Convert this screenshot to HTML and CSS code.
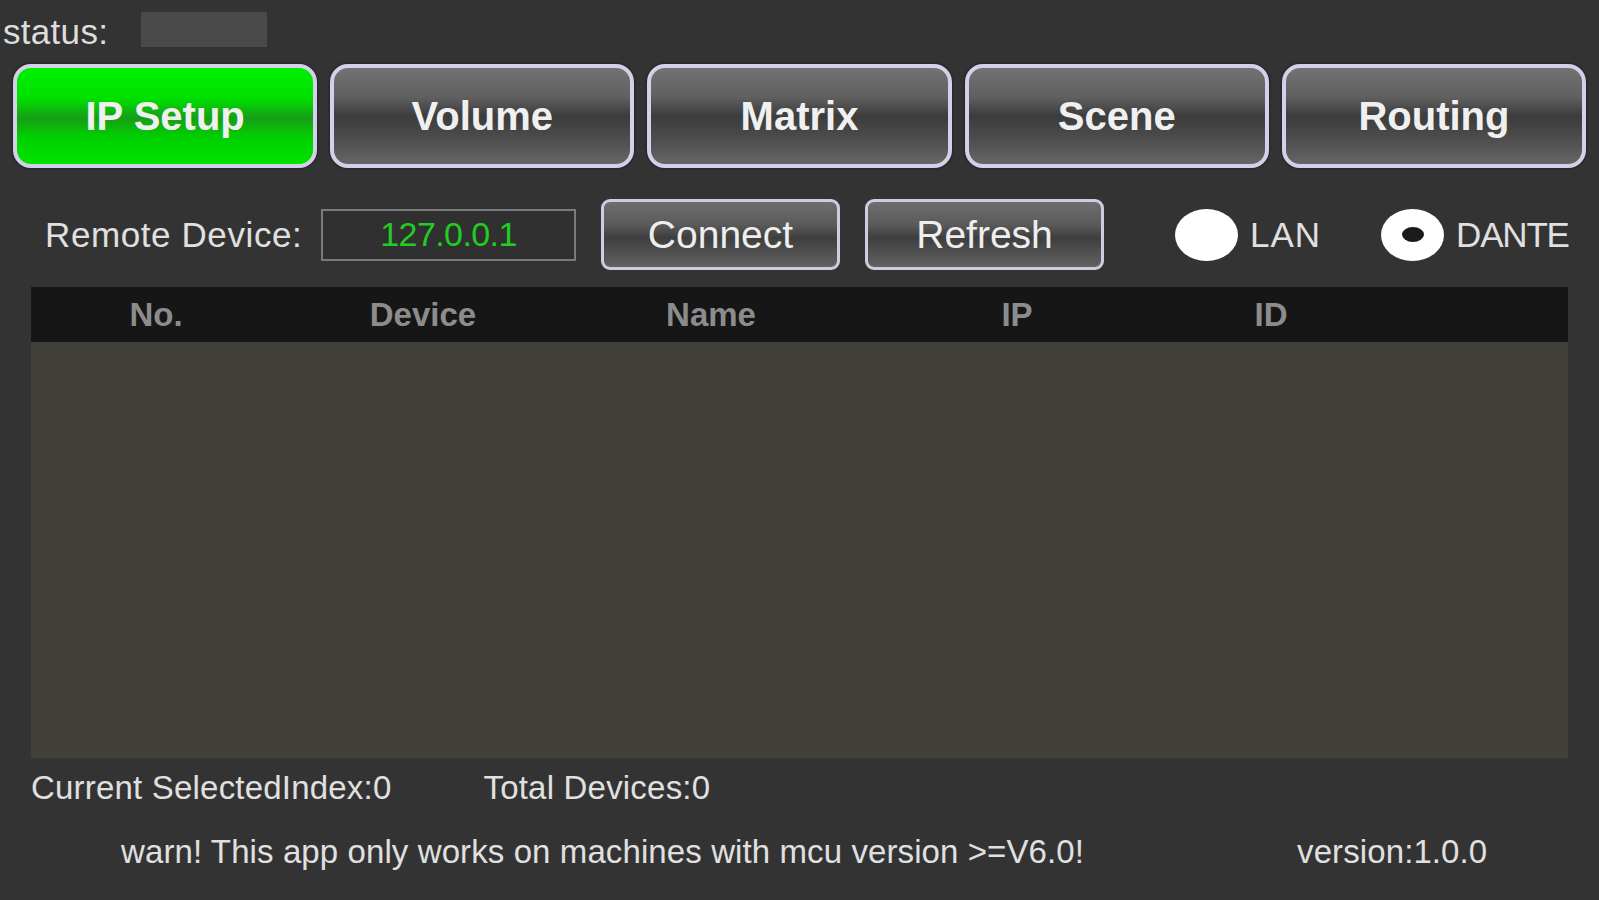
FILE: index.html
```html
<!DOCTYPE html>
<html>
<head>
<meta charset="utf-8">
<link rel="stylesheet" href="styles.css">
</head>
<body>
<div class="app">
  <div class="status-row">
    <span class="status-label">status:</span>
    <div class="status-box"></div>
  </div>
  <div class="tabs">
    <div class="tab active">IP Setup</div>
    <div class="tab">Volume</div>
    <div class="tab">Matrix</div>
    <div class="tab">Scene</div>
    <div class="tab">Routing</div>
  </div>
  <div class="controls">
    <span class="remote-label">Remote Device:</span>
    <div class="ip-field">127.0.0.1</div>
    <div class="btn btn-connect">Connect</div>
    <div class="btn btn-refresh">Refresh</div>
    <div class="radio radio-lan"></div>
    <span class="radio-label lan">LAN</span>
    <div class="radio radio-dante checked"><span class="dot"></span></div>
    <span class="radio-label dante">DANTE</span>
  </div>
  <div class="table">
    <div class="thead">
      <span>No.</span>
      <span>Device</span>
      <span>Name</span>
      <span>IP</span>
      <span>ID</span>
      <span></span>
    </div>
    <div class="tbody"></div>
  </div>
  <div class="info-row">
    <span class="sel-index">Current SelectedIndex:0</span>
    <span class="total">Total Devices:0</span>
  </div>
  <div class="warn-row">
    <span class="warn">warn! This app only works on machines with mcu version &gt;=V6.0!</span>
    <span class="version">version:1.0.0</span>
  </div>
</div>
</body>
</html>
```
FILE: styles.css
```css
* { box-sizing: border-box; }
html, body {
  margin: 0;
  padding: 0;
  background: #333333;
}
body {
  width: 1599px;
  height: 900px;
  overflow: hidden;
  font-family: "Liberation Sans", Arial, sans-serif;
  color: #e6e6e6;
}
.app {
  display: flex;
  flex-direction: column;
  width: 1599px;
  height: 900px;
}
.status-row {
  height: 58px;
  display: flex;
  align-items: flex-start;
  padding-left: 3px;
}
.status-label {
  font-size: 35px;
  line-height: 1;
  margin-top: 14px;
  color: #dddddd;
  letter-spacing: 0.3px;
}
.status-box {
  width: 126px;
  height: 35px;
  margin-top: 12px;
  margin-left: 33px;
  background: #4a4a4a;
}
.tabs {
  margin-top: 6px;
  padding: 0 13px;
  height: 104px;
  display: flex;
  gap: 13px;
}
.tab {
  flex: 1;
  border: 4px solid #d4d0ea;
  border-radius: 18px;
  display: flex;
  align-items: center;
  justify-content: center;
  font-size: 40px;
  font-weight: bold;
  color: #f0f0f0;
  background: linear-gradient(to bottom, #727272 0%, #606060 30%, #3c3c3c 50%, #4a4a4a 70%, #666666 100%);
  box-shadow: 0 0 3px rgba(0,0,0,0.6);
}
.tab.active {
  background: linear-gradient(to bottom, #00f000 0%, #00e000 32%, #179d17 52%, #00d000 72%, #00e400 100%);
}
.controls {
  margin-top: 31px;
  height: 71px;
  display: flex;
  align-items: center;
  padding-left: 45px;
}
.remote-label {
  font-size: 35px;
  letter-spacing: 0.6px;
  color: #e0e0e0;
  width: 258px;
  white-space: nowrap;
}
.ip-field {
  margin-left: 18px;
  width: 255px;
  height: 52px;
  border: 2px solid #7a7a7a;
  background: #303030;
  color: #22cc22;
  font-size: 34px;
  letter-spacing: -0.6px;
  display: flex;
  align-items: center;
  justify-content: center;
}
.btn {
  margin-left: 25px;
  width: 239px;
  height: 71px;
  border: 3px solid #cfcce2;
  border-radius: 9px;
  display: flex;
  align-items: center;
  justify-content: center;
  font-size: 39px;
  color: #eeeeee;
  background: linear-gradient(to bottom, #6e6e6e 0%, #5a5a5a 35%, #3e3e3e 55%, #4e4e4e 75%, #626262 100%);
}
.radio {
  width: 63px;
  height: 52px;
  border-radius: 50%;
  background: #ffffff;
  display: flex;
  align-items: center;
  justify-content: center;
}
.radio-lan { margin-left: 71px; }
.radio-dante { margin-left: 60px; }
.radio .dot {
  width: 22px;
  height: 15px;
  border-radius: 50%;
  background: #1a1a1a;
}
.radio-label {
  margin-left: 12px;
  font-size: 35px;
  color: #e0e0e0;
}
.radio-label.lan { letter-spacing: 1px; }
.radio-label.dante { letter-spacing: -1.2px; }
.table {
  margin-top: 17px;
  margin-left: 31px;
  width: 1537px;
  display: flex;
  flex-direction: column;
}
.thead {
  height: 55px;
  background: #161616;
  display: grid;
  grid-template-columns: 250px 284px 292px 320px 188px 1fr;
  align-items: center;
  font-size: 33px;
  font-weight: bold;
  color: #8c8c8c;
}
.thead span { text-align: center; }
.tbody {
  height: 416px;
  background: #42403b;
}
.info-row {
  margin-top: 12px;
  height: 36px;
  display: flex;
  align-items: center;
  padding-left: 31px;
  font-size: 33px;
  letter-spacing: 0.2px;
  color: #e0e0e0;
}
.total { margin-left: 92px; }
.warn-row {
  margin-top: 28px;
  height: 36px;
  display: flex;
  align-items: center;
  padding-left: 121px;
  font-size: 33px;
  letter-spacing: 0.1px;
  color: #e0e0e0;
}
.version { margin-left: 213px; }
```
